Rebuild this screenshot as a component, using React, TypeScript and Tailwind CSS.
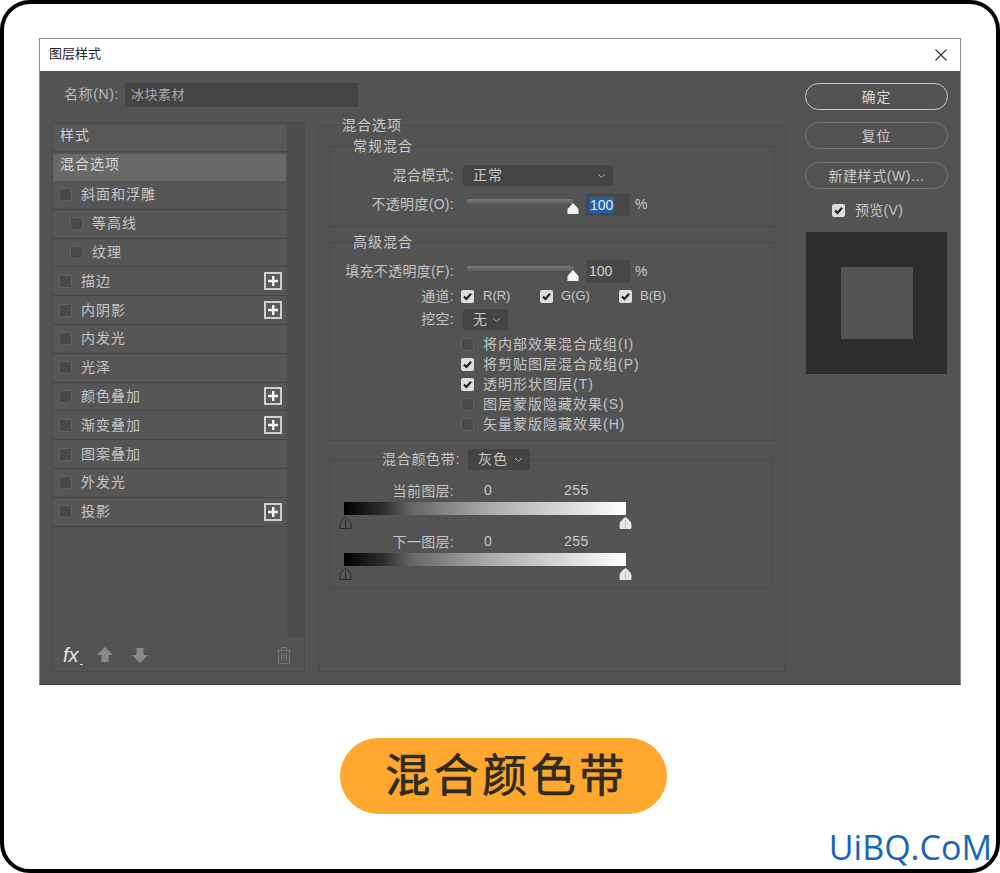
const cjk = "font-['Liberation_Sans','Noto_Sans_CJK_SC',sans-serif]";

const styleRows = [
  { name: "斜面和浮雕" },
  { name: "等高线", sub: true },
  { name: "纹理", sub: true },
  { name: "描边", plus: true },
  { name: "内阴影", plus: true },
  { name: "内发光" },
  { name: "光泽" },
  { name: "颜色叠加", plus: true },
  { name: "渐变叠加", plus: true },
  { name: "图案叠加" },
  { name: "外发光" },
  { name: "投影", plus: true },
];

const Check = ({ on = false }: { on?: boolean }) => (
  <span
    className={
      on
        ? "flex h-[13px] w-[13px] shrink-0 items-center justify-center rounded-[2px] bg-[#dedcde]"
        : "block h-[13px] w-[13px] shrink-0 rounded-[2px] border border-[#626162] bg-[#4a494a]"
    }
  >
    {on && (
      <svg width="11" height="11" viewBox="0 0 11 11" fill="none">
        <path d="M2 5.6 4.5 8 9 2.8" stroke="#222" strokeWidth="2.2" />
      </svg>
    )}
  </span>
);

const PlusBox = () => (
  <span className="ml-auto mr-[4px] flex h-[18px] w-[18px] items-center justify-center border-2 border-[#d0d0d0] bg-[#5a5a5a]">
    <svg width="12" height="12" viewBox="0 0 12 12">
      <path d="M5 1h2.4v3.8H11v2.4H7.4V11H5V7.2H1V4.800h4z" fill="#f4f4f4" />
    </svg>
  </span>
);

const Chevron = () => (
  <svg width="9" height="6" viewBox="0 0 9 6" fill="none" className="ml-auto shrink-0">
    <path d="M1 1 4.500 4.500 8 1" stroke="#a8a8a8" />
  </svg>
);

const Select = ({ value, w }: { value: string; w: string }) => (
  <div className={`flex h-[21px] items-center rounded-[2px] bg-[#454445] pl-[10px] pr-[7px] text-[14px] tracking-[1px] text-[#c8c8c8] ${w}`}>
    <span className="pb-[1px]">{value}</span>
    <Chevron />
  </div>
);

const Slider = () => (
  <div className="relative ml-[13px] h-[23px] w-[106px]">
    <div className="mt-[6px] h-[5px] w-full rounded-[2px] bg-linear-to-b from-[#7a7a7a] to-[#5d5d5d]" />
    <svg width="12" height="11" viewBox="0 0 12 11" className="absolute -right-[6px] top-[10px]">
      <path d="M6 0 11.500 6V11H.5V6z" fill="#f2f2f2" />
    </svg>
  </div>
);

const Label = ({ children }: { children: string }) => (
  <span className="w-[124px] shrink-0 pb-[1px] text-right text-[14px] leading-[16px] tracking-[.3px] text-[#c2c2c2]">{children}</span>
);

const Thumb = ({ light = false }: { light?: boolean }) => (
  <svg width="13" height="12" viewBox="0 0 13 12">
    <path
      d="M6.500.5C8.500 2 12 4.500 12 7.500V11.500H1V7.500C1 4.500 4.500 2 6.500.5z"
      fill={light ? "#e6e6e6" : "#555"}
      stroke={light ? "#e6e6e6" : "#2c2c2c"}
    />
    <path d="M6.500 3V11" stroke={light ? "#bbb" : "#2c2c2c"} />
  </svg>
);

const Band = ({ label, top }: { label: string; top: string }) => (
  <div className={top}>
    <div className="flex h-[16px] items-center">
      <Label>{label}</Label>
      <span className="w-[110px] pb-[1px] pl-[30px] text-[14px] tracking-[.5px] text-[#c8c8c8]">0</span>
      <span className="pb-[1px] text-[14px] tracking-[.5px] text-[#c8c8c8]">255</span>
    </div>
    <div className="ml-[14px] mt-[3px] h-[13px] w-[282px] bg-[linear-gradient(to_right,#000_0%,#2e2e2e_14%,#666_24%,#a8a8a8_50%,#d8d8d8_78%,#fff_100%)]" />
    <div className="ml-[9px] mt-[2px] flex h-[12px] w-[293px] justify-between">
      <Thumb />
      <Thumb light />
    </div>
  </div>
);

const blendChecks = [
  { text: "将内部效果混合成组(I)", on: false },
  { text: "将剪贴图层混合成组(P)", on: true },
  { text: "透明形状图层(T)", on: true },
  { text: "图层蒙版隐藏效果(S)", on: false },
  { text: "矢量蒙版隐藏效果(H)", on: false },
];

export default function App() {
  return (
    <div className={`relative h-[873px] w-[1000px] overflow-hidden rounded-[30px] border-4 border-black bg-white ${cjk}`}>
      <div className="ml-[35px] mt-[34px] h-[647px] w-[922px] border border-[#8c8c8c] border-b-[#3c3c3c]">
        {/* title bar */}
        <div className="flex h-[32px] items-center justify-between bg-white pl-[9px] pr-[12px]">
          <span className="pb-[3px] text-[13px] text-[#222]">图层样式</span>
          <svg width="14" height="14" viewBox="0 0 14 14" fill="none">
            <path d="M1.500 1.500 12.500 12.500M12.500 1.500 1.500 12.500" stroke="#333" strokeWidth="1.100" />
          </svg>
        </div>

        <div className="flex h-[613px] bg-[#545354] pl-[12px]">
          <div className="w-[734px]">
            {/* name */}
            <div className="mt-[12px] flex h-[24px] items-center">
              <span className="ml-[12px] w-[61px] pb-[1px] text-[14px] tracking-[.6px] text-[#b8b8b8]">名称(N):</span>
              <div className="flex h-[24px] w-[233px] items-center bg-[#454445] pb-[1px] pl-[6px] text-[13px] tracking-[.5px] text-[#a8a8a8]">
                冰块素材
              </div>
            </div>

            <div className="mt-[10px] flex gap-[13px]">
              {/* styles list */}
              <div className="mt-[5px] flex h-[550px] w-[253px] flex-col border border-[#4b4a4b]">
                <div className="flex flex-1">
                  <div className="w-[233px] pt-[2px]">
                    <div className="flex h-[27px] items-center border-b border-[#4a494a] bg-[#585758] pb-[5px] pl-[7px] text-[14px] tracking-[1px] text-[#cfcfcf]">
                      样式
                    </div>
                    <div className="mt-[2px] flex h-[27px] items-center bg-[#6a696a] pb-[6px] pl-[7px] text-[14px] tracking-[1px] text-[#d8d8d8]">
                      混合选项
                    </div>
                    {styleRows.map((row) => (
                      <div
                        key={row.name}
                        className={`flex h-[28.800px] items-center border-b border-[#474647] bg-[#575657] text-[14px] tracking-[1px] text-[#c4c4c4] ${row.sub ? "pl-[17px]" : "pl-[6px]"}`}
                      >
                        <Check />
                        <span className="ml-[9px]">{row.name}</span>
                        {row.plus && <PlusBox />}
                      </div>
                    ))}
                  </div>
                  <div className="ml-[1px] flex-1 bg-[#4d4c4d]" />
                </div>
                <div className="flex h-[34px] items-center pl-[10px] pt-[2px]">
                  <span className="text-[20px] italic leading-none text-[#e2e2e2]">fx</span>
                  <span className="ml-[1px] mt-[18px] h-[1px] w-[3px] bg-[#e2e2e2]" />
                  <svg width="18" height="18" viewBox="0 0 18 18" className="ml-[13px]">
                    <path d="M9 1 17 9H12.500V16H5.500V9H1z" fill="#8a8a8a" />
                  </svg>
                  <svg width="18" height="18" viewBox="0 0 18 18" className="ml-[17px]">
                    <path d="M9 17 17 9H12.500V2H5.500V9H1z" fill="#8a8a8a" />
                  </svg>
                  <svg width="16" height="19" viewBox="0 0 16 19" fill="none" className="ml-[127px]" stroke="#777">
                    <path d="M1 4.500H15M5.500 4.500V1.500H10.500V4.500M2.500 4.500V17.500H13.500V4.500M5.500 7V15M8 7V15M10.500 7V15" />
                  </svg>
                </div>
              </div>

              {/* blend options */}
              <fieldset className="h-[555px] w-[468px] border border-[#4b4a4b]">
                <legend className="ml-[23px] h-[16px] text-[14px] leading-[17px] tracking-[1px] text-[#c8c8c8]">混合选项</legend>

                <fieldset className="ml-[10px] mt-[5px] h-[89px] w-[446px] border border-[#4b4a4b]">
                  <legend className="ml-[23px] h-[16px] text-[14px] leading-[17px] tracking-[1px] text-[#c8c8c8]">常规混合</legend>
                  <div className="mt-[11px] flex items-center">
                    <Label>混合模式:</Label>
                    <div className="ml-[9px]">
                      <Select value="正常" w="w-[150px]" />
                    </div>
                  </div>
                  <div className="mt-[7px] flex items-center">
                    <Label>不透明度(O):</Label>
                    <Slider />
                    <div className="ml-[13px] flex h-[23px] w-[44px] items-center border border-[#2c5278] bg-[#484748] pl-[2px]">
                      <span className="bg-[#1f62a8] px-[1px] text-[14px] leading-[16px] text-[#e8e8e8]">100</span>
                    </div>
                    <span className="ml-[5px] pb-[1px] text-[14px] text-[#c8c8c8]">%</span>
                  </div>
                </fieldset>

                <fieldset className="ml-[10px] mt-[7px] h-[207px] w-[446px] border border-[#4b4a4b]">
                  <legend className="ml-[23px] h-[16px] text-[14px] leading-[17px] tracking-[1px] text-[#c8c8c8]">高级混合</legend>
                  <div className="mt-[10px] flex items-center">
                    <Label>填充不透明度(F):</Label>
                    <Slider />
                    <div className="ml-[13px] flex h-[23px] w-[44px] items-center bg-[#484748] pl-[3px] text-[14px] text-[#d0d0d0]">100</div>
                    <span className="ml-[5px] pb-[1px] text-[14px] text-[#c8c8c8]">%</span>
                  </div>
                  <div className="mt-[5px] flex h-[16px] items-center">
                    <Label>通道:</Label>
                    <span className="ml-[7px]"><Check on /></span>
                    <span className="ml-[9px] w-[57px] text-[13px] text-[#c8c8c8]">R(R)</span>
                    <Check on />
                    <span className="ml-[8px] w-[58px] text-[13px] text-[#c8c8c8]">G(G)</span>
                    <Check on />
                    <span className="ml-[8px] text-[13px] text-[#c8c8c8]">B(B)</span>
                  </div>
                  <div className="mt-[5px] flex items-center">
                    <Label>挖空:</Label>
                    <div className="ml-[9px]">
                      <Select value="无" w="w-[45px]" />
                    </div>
                  </div>
                  <div className="ml-[131px] mt-[4px]">
                    {blendChecks.map((c) => (
                      <div key={c.text} className="flex h-[20px] items-center">
                        <Check on={c.on} />
                        <span className="ml-[9px] text-[14px] tracking-[1px] text-[#c4c4c4]">{c.text}</span>
                      </div>
                    ))}
                  </div>
                </fieldset>

                <fieldset className="ml-[10px] mt-[8px] h-[139px] w-[444px] border border-[#4b4a4b]">
                  <legend className="ml-[52px]">
                    <div className="flex items-center gap-[8px]">
                      <span className="pb-[1px] text-[14px] leading-[16px] tracking-[.7px] text-[#c4c4c4]">混合颜色带:</span>
                      <Select value="灰色" w="w-[62px]" />
                    </div>
                  </legend>
                  <Band label="当前图层:" top="mt-[13px]" />
                  <Band label="下一图层:" top="mt-[5px]" />
                </fieldset>
              </fieldset>
            </div>
          </div>

          {/* right column */}
          <div className="ml-[19px] w-[143px] pt-[12px]">
            <div className="flex h-[27px] items-center justify-center rounded-full border-[1.500px] border-[#c8c8c8] pt-[2px] text-[14px] tracking-[1px] text-[#d4d4d4]">确定</div>
            <div className="mt-[12px] flex h-[27px] items-center justify-center rounded-full border border-[#757475] pt-[2px] text-[14px] tracking-[1px] text-[#c8c8c8]">复位</div>
            <div className="mt-[13px] flex h-[27px] items-center justify-center rounded-full border border-[#757475] pt-[2px] text-[14px] tracking-[.6px] text-[#c8c8c8]">新建样式(W)...</div>
            <div className="mt-[15px] flex h-[13px] items-center pl-[27px]">
              <Check on />
              <span className="ml-[10px] text-[14px] tracking-[.3px] text-[#c4c4c4]">预览(V)</span>
            </div>
            <div className="ml-[1px] mt-[15px] flex h-[142px] w-[141px] items-center justify-center bg-[#2e2c2e]">
              <div className="h-[72px] w-[72px] bg-[#545354]" />
            </div>
          </div>
        </div>
      </div>

      {/* caption */}
      <div className="ml-[336px] mt-[53px] flex h-[76px] w-[327px] items-center justify-center rounded-full bg-[#fea82f] pl-[6px] pt-[2px] text-[45px] tracking-[3.500px] text-[#2e2a1c] [-webkit-text-stroke:0.7px_#2e2a1c]">
        混合颜色带
      </div>
      <span className="absolute -bottom-[4px] right-[4px] font-['Open_Sans',sans-serif] text-[34px] text-[#1565c0]">UiBQ.CoM</span>
    </div>
  );
}
